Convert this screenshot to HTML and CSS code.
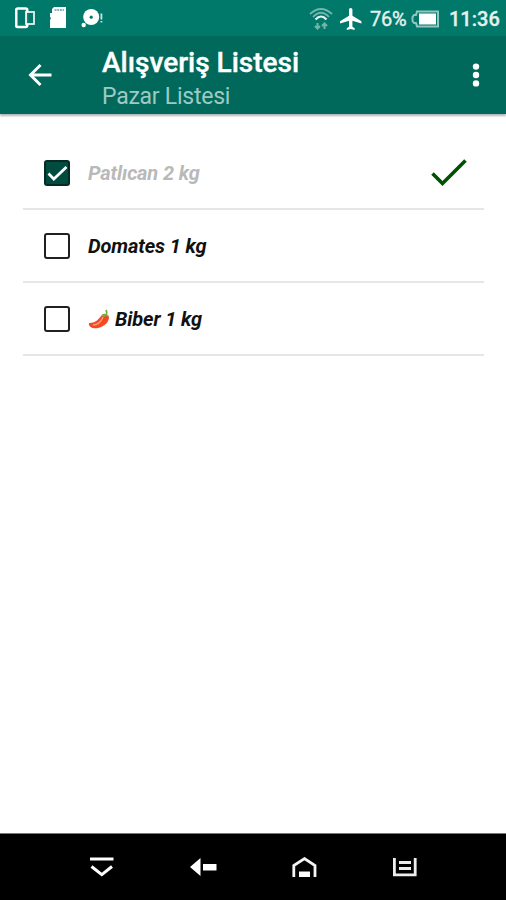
FILE: index.html
```html
<!DOCTYPE html>
<html lang="tr">
<head>
<meta charset="utf-8">
<title>Alışveriş Listesi</title>
<link rel="stylesheet" href="styles.css">
</head>
<body>
<header class="status">
  <div class="status-left">
    <svg width="20" height="22" viewBox="0 0 20 22" fill="none" stroke="#fff"><rect x="1.2" y="1.5" width="11" height="18.5" rx="1.5" stroke-width="2.6"/><rect x="11" y="5" width="8" height="12" fill="#00796b" stroke-width="1.8" opacity=".9"/></svg>
    <svg width="16" height="22" viewBox="0 0 16 22"><path d="M4 0h12v21H0v-8l1-2-1-1V6h2V2z" fill="#fff"/><path d="M4.5 3H14" stroke="#8bb8b0" stroke-width="2" stroke-dasharray="2 .7"/></svg>
    <svg width="22" height="19" viewBox="0 0 22 19" fill="#fff"><circle cx="10.2" cy="8" r="8"/><circle cx="10.2" cy="8.2" r="1.6" fill="#00796b"/><circle cx="2.7" cy="16" r="2.2"/><path d="M19.5 4.5h1.8v6h-1.8zM19.5 12h1.8v1.6h-1.8z" opacity=".8"/></svg>
  </div>
  <div class="status-right">
    <svg class="wifi" width="24" height="24" viewBox="0 0 24 24" fill="none" stroke="#fff"><path d="M1 7Q12-3 23 7M4 10Q12 1.500 20 10" stroke-width="1.800" opacity=".45"/><path d="M6.500 12.500Q12 6.500 17.500 12.500" stroke-width="2.200" opacity=".9"/><path d="M8.500 16v6M6 19l2.500 2.500 2.500-2.500M15.500 22v-6M13 19l2.500-2.500 2.500 2.500" stroke-width="2" opacity=".45"/></svg>
    <svg class="plane" width="22" height="22" viewBox="2 2 19.500 20" preserveAspectRatio="none" fill="#fff"><path d="M21 16v-2l-8-5V3.500c0-.83-.67-1.500-1.500-1.500S10 2.670 10 3.500V9l-8 5v2l8-2.500V19l-2 1.500V22l3.500-1 3.500 1v-1.500L13 19v-5.500l8 2.500z"/></svg>
    <span class="percent">76%</span>
    <svg class="battery" width="29" height="18" viewBox="0 0 29 18" fill="none" stroke="#e1efec"><path d="M6 1.500H27v15H6L5 13H3L1.500 11V7L3 5H5z" stroke-width="2" opacity=".65"/><rect x="8" y="3.500" width="17" height="11" fill="#fff" stroke="none"/></svg>
    <span class="clock">11:36</span>
  </div>
</header>
<div class="appbar">
  <svg class="back" width="24" height="22" viewBox="0 0 24 22" fill="none" stroke="#fff" stroke-width="2.900"><path d="M12.500 1L2.500 11l10 10M2.500 11H23.500"/></svg>
  <div class="titles">
    <h1>Alışveriş Listesi</h1>
    <p>Pazar Listesi</p>
  </div>
  <svg class="more" width="8" height="24" viewBox="0 0 8 24" fill="#fff"><circle cx="4" cy="3.600" r="3.200"/><circle cx="4" cy="12" r="3.200"/><circle cx="4" cy="20.400" r="3.200"/></svg>
</div>
<main>
  <ul class="list">
    <li class="done">
      <span class="box checked"><svg width="21" height="19" viewBox="0 0 21 19" fill="none" stroke="#fff" stroke-width="2.700"><path d="M1.500 9.500l5.300 5.500L19.500 3"/></svg></span>
      <span class="name">Patlıcan 2 kg</span>
      <svg class="tick" width="36" height="28" viewBox="0 0 36 28" fill="none" stroke="#005200" stroke-width="3.600"><path d="M1.500 14.500L11.500 24.500 34.500 1.500"/></svg>
    </li>
    <li><span class="box"></span><span class="name">Domates 1 kg</span></li>
    <li><span class="box"></span>
      <svg class="pepper" width="22" height="21" viewBox="0 0 22 21"><path d="M14 6C11 9 9 14 1 14c-1 4 4 6 9 5 7-2 11-6 11-11-1-3-5-4-7-2z" fill="#f34a24"/><path d="M15 8c-2 5-5 8-10 8" fill="none" stroke="#ff987a" stroke-width="1.500"/><path d="M13.500 7c1-3 6-3 7.500 1l-3-1-2 1z" fill="#79ad3e"/><path d="M18 5.500Q19.500 4 18 1" fill="none" stroke="#79ad3e" stroke-width="1.700"/></svg>
      <span class="name after-icon">Biber 1 kg</span></li>
  </ul>
</main>
<nav>
  <svg width="24" height="20" viewBox="0 0 24 20" fill="none" stroke="#fff" stroke-width="3"><path d="M0 2h23.500M1.500 9.500l10.300 8.200L22 9.500"/></svg>
  <svg width="27" height="18" viewBox="0 0 27 18" fill="#fff"><path d="M0 9L10.500 0v18zM13 6h13.500v6.500H13z"/></svg>
  <svg class="home" width="25" height="21" viewBox="0 0 25 21" fill="none" stroke="#f4f4f4" stroke-width="2.800"><path d="M1.800 20V8.500L12.500 1.600 23 8.500V20"/><path d="M7 14.500h11V20H7z" fill="#fff" stroke="none"/></svg>
  <svg width="24" height="19" viewBox="0 0 24 19" fill="none" stroke="#eee" stroke-width="2.800"><path d="M1.400 0v16.800h20.800V0M6 4.500h12M6 10.500h12"/></svg>
</nav>
</body>
</html>
```

FILE: styles.css
```css
* { box-sizing: border-box; margin: 0; padding: 0; }
body {
  width: 506px;
  height: 900px;
  display: flex;
  flex-direction: column;
  background: #fff;
  font-family: Roboto, "Noto Sans", sans-serif;
  overflow: hidden;
}
svg { display: block; flex: none; }
.status {
  height: 36px;
  flex: none;
  display: flex;
  justify-content: space-between;
  background: #00796b;
  color: #e4f1ee;
}
.status-left { display: flex; gap: 15px; padding: 7px 0 0 15px; }
.status-left svg:last-child { margin-top: 2px; }
.status-right { display: flex; align-items: center; padding-right: 6px; height: 37px; }
.plane { margin-left: 7px; }
.percent {
  width: 37px;
  margin-left: 8px;
  font-size: 20px;
  line-height: 24px;
  letter-spacing: -.3px;
  white-space: nowrap;
  -webkit-text-stroke: .4px;
}
.battery { margin-left: 4px; }
.clock {
  width: 51px;
  margin-left: 9px;
  font-size: 20px;
  font-weight: 500;
  line-height: 24px;
  white-space: nowrap;
  -webkit-text-stroke: .3px;
}
.appbar {
  height: 78px;
  flex: none;
  display: flex;
  padding: 0 26px 0 28px;
  background: #00695c;
  color: #fff;
  box-shadow: 0 2px 2px rgba(0, 0, 0, .3);
}
.back { margin-top: 28px; }
.titles { margin-left: 50px; flex: 1; padding-top: 10px; }
h1 {
  font-size: 28px;
  line-height: 34px;
  font-weight: 500;
  -webkit-text-stroke: .4px;
}
.titles p {
  font-size: 23px;
  line-height: 33px;
  letter-spacing: -.25px;
  color: #9fc9c3;
}
.more { margin-top: 27px; }
main { flex: 1; padding: 23px 22px 0 23px; }
.list { list-style: none; }
.list li {
  height: 73px;
  display: flex;
  align-items: center;
  padding: 1px 17px 0 21px;
  border-bottom: 2px solid #e6e6e6;
}
.box {
  width: 26px;
  height: 26px;
  flex: none;
  display: grid;
  place-items: center;
  border: 2px solid #202020;
  border-radius: 3px;
}
.checked { background: #004d40; border-color: #072a24; }
.name {
  margin-left: 18px;
  flex: 1;
  font-size: 20px;
  font-weight: 700;
  font-style: italic;
  line-height: 26px;
  letter-spacing: -.13px;
  color: #111;
  white-space: nowrap;
}
.done .name { color: #b9b9b9; }
.pepper { margin: 0 4px 0 18px; }
.name.after-icon { margin-left: 1px; }
nav {
  height: 67px;
  flex: none;
  display: flex;
  align-items: center;
  gap: 76px;
  padding-left: 90px;
  background: #000;
  border-top: 1px solid #777;
}
.home { margin-left: -1px; }
```
